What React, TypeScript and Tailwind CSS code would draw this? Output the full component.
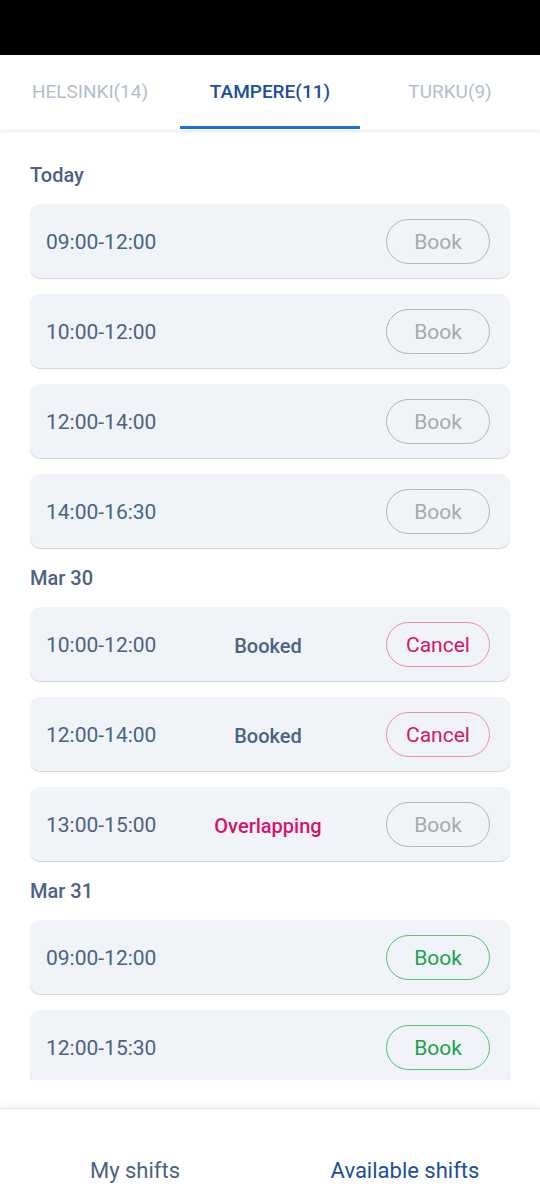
import React from "react";

type Shift = {
  time: string;
  status?: "booked" | "overlap";
  action: "book-disabled" | "cancel" | "book";
};

const groups: { title: string; shifts: Shift[] }[] = [
  {
    title: "Today",
    shifts: [
      { time: "09:00-12:00", action: "book-disabled" },
      { time: "10:00-12:00", action: "book-disabled" },
      { time: "12:00-14:00", action: "book-disabled" },
      { time: "14:00-16:30", action: "book-disabled" },
    ],
  },
  {
    title: "Mar 30",
    shifts: [
      { time: "10:00-12:00", status: "booked", action: "cancel" },
      { time: "12:00-14:00", status: "booked", action: "cancel" },
      { time: "13:00-15:00", status: "overlap", action: "book-disabled" },
    ],
  },
  {
    title: "Mar 31",
    shifts: [
      { time: "09:00-12:00", action: "book" },
      { time: "12:00-15:30", action: "book" },
    ],
  },
];

function ActionButton({ action }: { action: Shift["action"] }) {
  if (action === "cancel") {
    return (
      <button className="w-[104px] h-[45px] rounded-full border border-[#f08db3] text-[#d3166a] text-[21px] flex items-center justify-center pt-[3px] bg-transparent">
        Cancel
      </button>
    );
  }
  if (action === "book") {
    return (
      <button className="w-[104px] h-[45px] rounded-full border border-[#4fc47a] text-[#22a04c] text-[21px] flex items-center justify-center pt-[3px] bg-transparent">
        Book
      </button>
    );
  }
  return (
    <button className="w-[104px] h-[45px] rounded-full border border-[#b5b5b5] text-[#a9a9a9] text-[21px] flex items-center justify-center pt-[3px] bg-transparent">
      Book
    </button>
  );
}

function ShiftCard({ s }: { s: Shift }) {
  return (
    <div className="h-[74px] rounded-[10px] bg-[#f0f3f8] shadow-[0_1px_1px_rgba(0,0,0,0.18)] grid grid-cols-[1fr_auto_1fr] items-center pl-[16px] pr-[20px]">
      <span className="text-[21px] text-[#4c6282] justify-self-start pt-[3px]">{s.time}</span>
      <span
        className={
          s.status === "overlap"
            ? "text-[20px] font-medium text-[#d5146c] pt-[3px]"
            : "text-[20px] font-medium text-[#4c6282] pt-[3px]"
        }
      >
        {s.status === "booked" ? "Booked" : s.status === "overlap" ? "Overlapping" : ""}
      </span>
      <div className="justify-self-end">
        <ActionButton action={s.action} />
      </div>
    </div>
  );
}

export default function App() {
  return (
    <div
      className="w-[540px] h-[1200px] bg-white flex flex-col overflow-hidden"
      style={{ fontFamily: "Roboto, 'Noto Sans', sans-serif" }}
    >
      <div className="h-[55px] bg-black shrink-0" />
      <div className="h-[75px] shrink-0 flex relative z-10 bg-white shadow-[0_2px_3px_rgba(0,0,0,0.08)]">
        <div className="w-[180px] flex items-center justify-center text-[19px] text-[#b2bece]">HELSINKI(14)</div>
        <div className="w-[180px] flex items-center justify-center text-[19px] font-medium text-[#1b4e9b] relative">
          TAMPERE(11)
          <div className="absolute left-0 right-0 bottom-[1px] h-[3px] bg-[#1a73e3]" />
        </div>
        <div className="w-[180px] flex items-center justify-center text-[19px] text-[#b2bece]">TURKU(9)</div>
      </div>
      <div className="h-[950px] shrink-0 overflow-hidden px-[30px]">
        {groups.map((g, gi) => (
          <div key={g.title} className={gi === 0 ? "pt-[30px]" : "pt-[15px]"}>
            <div className="h-[30px] flex items-center text-[20px] font-medium text-[#4c6282]">{g.title}</div>
            <div className="mt-[14px] flex flex-col gap-[16px]">
              {g.shifts.map((s, i) => (
                <ShiftCard key={i} s={s} />
              ))}
            </div>
          </div>
        ))}
      </div>
      <div className="h-[28px] shrink-0 bg-white" />
      <div className="flex-1 flex bg-white border-t border-[#e6e6e6] shadow-[0_-4px_6px_rgba(0,0,0,0.04)] relative">
        <div className="w-[270px] flex justify-center pt-[45px] text-[22px] text-[#4c6282]">My shifts</div>
        <div className="w-[270px] flex justify-center pt-[45px] text-[22px] text-[#1b4e9b]">Available shifts</div>
      </div>
    </div>
  );
}
